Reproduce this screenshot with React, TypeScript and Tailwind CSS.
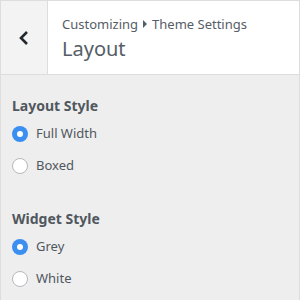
import React from "react";

function Radio({ checked, label }: { checked?: boolean; label: string }) {
  return (
    <div className="flex items-center h-[32px]">
      {checked ? (
        <span className="w-[16px] h-[16px] rounded-full bg-[#3b8ff0] flex items-center justify-center">
          <span className="w-[6px] h-[6px] rounded-full bg-white" />
        </span>
      ) : (
        <span className="w-[16px] h-[16px] rounded-full bg-white border border-[#b4b9be]" />
      )}
      <span className="ml-[8px] text-[13px] text-[#50575e]">{label}</span>
    </div>
  );
}

export default function App() {
  return (
    <div
      className="w-[300px] h-[300px] bg-[#eeeeee] border-l border-r border-t border-[#dddddd] overflow-hidden"
      style={{ fontFamily: '"Noto Sans", "Open Sans", sans-serif' }}
    >
      <div className="flex h-[74px] border-b border-[#dddddd]">
        <div className="w-[47px] bg-[#f3f3f3] border-r border-[#dddddd] flex items-center justify-center">
          <svg width="12" height="16" viewBox="0 0 12 16">
            <path d="M9 2 L3 8 L9 14" fill="none" stroke="#23282d" strokeWidth="2.6" />
          </svg>
        </div>
        <div className="flex-1 bg-white pl-[14px] pt-[13px]">
          <div className="flex items-center text-[13px] leading-[20px] text-[#555d66]">
            <span>Customizing</span>
            <svg width="8" height="10" viewBox="0 0 8 10" className="mx-[3px]">
              <path d="M2 1 L6 5 L2 9 Z" fill="#555d66" />
            </svg>
            <span>Theme Settings</span>
          </div>
          <div className="text-[20px] leading-[28px] text-[#555d66] mt-[1px]">Layout</div>
        </div>
      </div>
      <div className="px-[11px] pt-[21px]">
        <div className="text-[14px] font-bold text-[#50575e] leading-[20px] mb-[2px]">Layout Style</div>
        <Radio checked label="Full Width" />
        <Radio label="Boxed" />
        <div className="text-[14px] font-bold text-[#50575e] leading-[20px] mt-[27px] mb-[2px]">Widget Style</div>
        <Radio checked label="Grey" />
        <Radio label="White" />
      </div>
    </div>
  );
}
